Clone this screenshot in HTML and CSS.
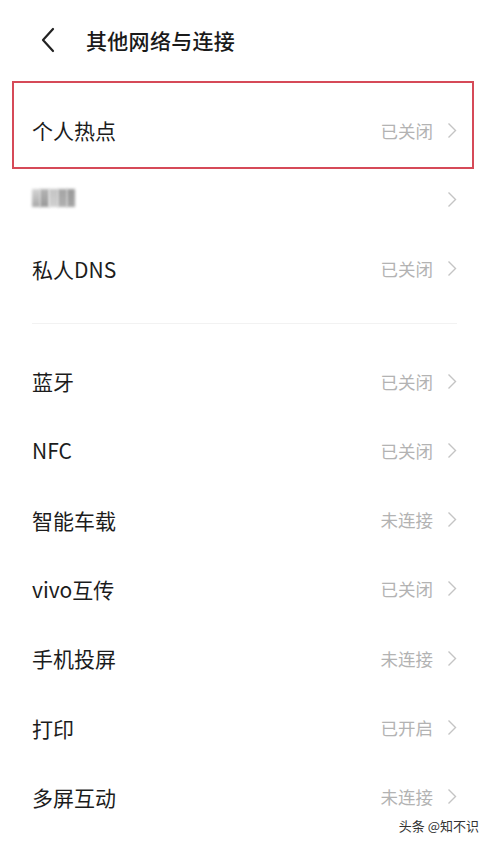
FILE: index.html
```html
<!DOCTYPE html>
<html lang="zh-CN">
<head>
<meta charset="utf-8">
<link rel="stylesheet" href="styles.css">
</head>
<body>
<div class="page">
  <header class="header">
    <svg class="back" width="16" height="26" viewBox="0 0 16 26"><path d="M13 2 L3 13 L13 24" fill="none" stroke="#222" stroke-width="2.2" stroke-linecap="round" stroke-linejoin="round"/></svg>
    <h1 class="title">其他网络与连接</h1>
  </header>
  <section class="group first">
    <div class="row"><span class="label">个人热点</span><span class="value">已关闭</span><svg class="chev" width="10" height="17" viewBox="0 0 10 17"><path d="M1.5 1.5 L8.5 8.5 L1.5 15.5" fill="none" stroke="#c4c4c4" stroke-width="1.4"/></svg></div>
    <div class="row"><span class="label blur"><i class="px a"></i><i class="px b"></i><i class="px c"></i><i class="px d"></i><i class="px e"></i></span><span class="value"></span><svg class="chev" width="10" height="17" viewBox="0 0 10 17"><path d="M1.5 1.5 L8.5 8.5 L1.5 15.5" fill="none" stroke="#c4c4c4" stroke-width="1.4"/></svg></div>
    <div class="row"><span class="label">私人DNS</span><span class="value">已关闭</span><svg class="chev" width="10" height="17" viewBox="0 0 10 17"><path d="M1.5 1.5 L8.5 8.5 L1.5 15.5" fill="none" stroke="#c4c4c4" stroke-width="1.4"/></svg></div>
    <div class="highlight"></div>
  </section>
  <div class="divider"></div>
  <section class="group">
    <div class="row"><span class="label">蓝牙</span><span class="value">已关闭</span><svg class="chev" width="10" height="17" viewBox="0 0 10 17"><path d="M1.5 1.5 L8.5 8.5 L1.5 15.5" fill="none" stroke="#c4c4c4" stroke-width="1.4"/></svg></div>
    <div class="row"><span class="label">NFC</span><span class="value">已关闭</span><svg class="chev" width="10" height="17" viewBox="0 0 10 17"><path d="M1.5 1.5 L8.5 8.5 L1.5 15.5" fill="none" stroke="#c4c4c4" stroke-width="1.4"/></svg></div>
    <div class="row"><span class="label">智能车载</span><span class="value">未连接</span><svg class="chev" width="10" height="17" viewBox="0 0 10 17"><path d="M1.5 1.5 L8.5 8.5 L1.5 15.5" fill="none" stroke="#c4c4c4" stroke-width="1.4"/></svg></div>
    <div class="row"><span class="label">vivo互传</span><span class="value">已关闭</span><svg class="chev" width="10" height="17" viewBox="0 0 10 17"><path d="M1.5 1.5 L8.5 8.5 L1.5 15.5" fill="none" stroke="#c4c4c4" stroke-width="1.4"/></svg></div>
    <div class="row"><span class="label">手机投屏</span><span class="value">未连接</span><svg class="chev" width="10" height="17" viewBox="0 0 10 17"><path d="M1.5 1.5 L8.5 8.5 L1.5 15.5" fill="none" stroke="#c4c4c4" stroke-width="1.4"/></svg></div>
    <div class="row"><span class="label">打印</span><span class="value">已开启</span><svg class="chev" width="10" height="17" viewBox="0 0 10 17"><path d="M1.5 1.5 L8.5 8.5 L1.5 15.5" fill="none" stroke="#c4c4c4" stroke-width="1.4"/></svg></div>
    <div class="row"><span class="label">多屏互动</span><span class="value">未连接</span><svg class="chev" width="10" height="17" viewBox="0 0 10 17"><path d="M1.5 1.5 L8.5 8.5 L1.5 15.5" fill="none" stroke="#c4c4c4" stroke-width="1.4"/></svg></div>
  </section>
  <div class="watermark">头条 @知不识</div>
</div>
</body>
</html>
```
FILE: styles.css
```css
html, body {
  margin: 0;
  padding: 0;
  background: #fff;
}
body {
  font-family: "Noto Sans CJK SC", "Noto Sans", sans-serif;
  color: #1a1a1a;
}
.page {
  position: relative;
  width: 489px;
  height: 843px;
  overflow: hidden;
}
.header {
  height: 80px;
  display: flex;
  align-items: center;
  padding-left: 40px;
  box-sizing: border-box;
}
.title {
  margin: 0 0 0 30px;
  font-size: 21px;
  font-weight: 500;
  color: #1a1a1a;
  letter-spacing: 0.3px;
}
.group {
  position: relative;
  display: flex;
  flex-direction: column;
}
.group.first {
  padding-top: 15.5px;
}
.row {
  height: 69.3px;
  display: flex;
  align-items: center;
  padding: 0 32px;
}
.label {
  flex: 1;
  font-size: 21px;
  color: #1c1c1c;
}
.value {
  font-size: 17.5px;
  color: #b3b3b3;
  margin-right: 14px;
}
.chev {
  display: block;
}
.blur {
  display: flex;
  flex: 1;
  height: 20px;
}
.px {
  display: block;
  width: 9px;
  height: 18px;
  filter: blur(1.5px);
}
.px.a { background: linear-gradient(#d4d4d4, #a8a8a8); width: 8px; }
.px.b { background: linear-gradient(#b4b4b4, #999); }
.px.c { background: linear-gradient(#c4c4c4, #d0d0d0); }
.px.d { background: linear-gradient(#a4a4a4, #b0b0b0); }
.px.e { background: linear-gradient(#999, #a4a4a4); width: 8px; }
.highlight {
  position: absolute;
  left: 12px;
  top: 0;
  width: 462px;
  height: 88px;
  margin-top: 1px;
  border: 2px solid #d64a58;
  box-sizing: border-box;
}
.divider {
  height: 1px;
  background: #f2f2f2;
  margin: 20px 32px 22px;
}
.watermark {
  position: absolute;
  right: 10px;
  bottom: 8px;
  font-size: 13px;
  color: #333;
}
```
